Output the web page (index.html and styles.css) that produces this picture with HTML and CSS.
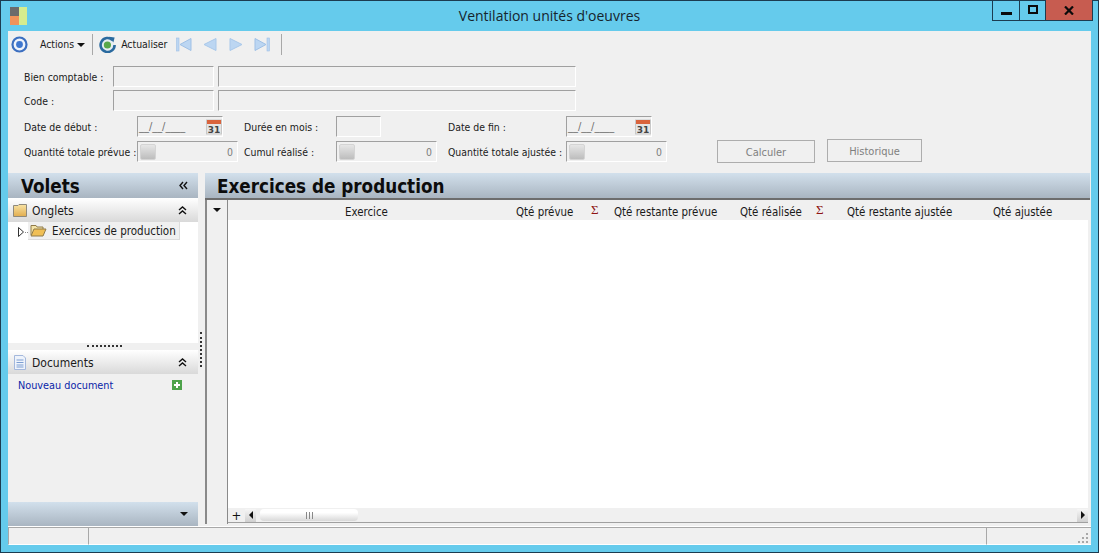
FILE: index.html
```html
<!DOCTYPE html>
<html lang="fr">
<head>
<meta charset="utf-8">
<title>Ventilation unités d'oeuvres</title>
<link rel="stylesheet" href="styles.css">
</head>
<body>
<div class="window">
  <header class="titlebar">
    <div class="tb-left">
      <svg class="app-icon" width="17" height="18" viewBox="0 0 17 18"><rect x="0" y="0" width="9" height="9" fill="#6b6b6b"/><rect x="0" y="9" width="9" height="9" fill="#f0935a"/><rect x="9" y="0" width="8" height="18" fill="#d6ec8e"/></svg>
    </div>
    <div class="title">Ventilation unités d'oeuvres</div>
    <div class="tb-right">
      <div class="winbtns">
        <div class="wb wb-min"><svg width="11" height="4" viewBox="0 0 11 4"><rect width="11" height="3" y="1" fill="#0b0b0b"/></svg></div>
        <div class="wb wb-max"><svg width="10" height="9" viewBox="0 0 10 9"><rect x="1" y="1" width="8" height="7" fill="none" stroke="#0b0b0b" stroke-width="2"/></svg></div>
        <div class="wb wb-close"><svg width="10" height="9" viewBox="0 0 10 9"><path d="M1 0.5L9 8.5M9 0.5L1 8.5" stroke="#0b0b0b" stroke-width="2.2" fill="none"/></svg></div>
      </div>
    </div>
  </header>

  <main class="client">
    <div class="toolbar">
      <svg class="ic-target" width="17" height="17" viewBox="0 0 17 17"><circle cx="8.5" cy="8.5" r="7" fill="#eef3fb" stroke="#3c6fc0" stroke-width="2.2"/><circle cx="8.5" cy="8.5" r="3.4" fill="#3f77cf"/></svg>
      <span class="tool-actions">Actions</span>
      <span class="caret"></span>
      <span class="tsep tsep-1"></span>
      <svg class="ic-refresh" width="17" height="17" viewBox="0 0 17 17"><path d="M13.5 4A7 7 0 1 0 15.6 9" fill="#e6edf2" stroke="#2a6a9f" stroke-width="2.6"/><path d="M10 0.8L15.6 1.4L14.4 6.4Z" fill="#2a6a9f"/><circle cx="8.4" cy="9" r="3.6" fill="#58a84a"/></svg>
      <span class="tool-refresh">Actualiser</span>
      <svg class="nav nav-1" width="16" height="15" viewBox="0 0 16 15"><rect x="0.5" y="1" width="2.5" height="13" fill="#bcd6f2" stroke="#9fc0e6" stroke-width="0.6"/><path d="M15 1.5V13.5L4 7.5Z" fill="#bcd6f2" stroke="#9fc0e6"/></svg>
      <svg class="nav nav-2" width="14" height="15" viewBox="0 0 14 15"><path d="M13 1.5V13.5L1 7.5Z" fill="#bcd6f2" stroke="#a9c8ea"/></svg>
      <svg class="nav nav-3" width="14" height="15" viewBox="0 0 14 15"><path d="M1 1.5V13.5L13 7.5Z" fill="#bcd6f2" stroke="#a9c8ea"/></svg>
      <svg class="nav nav-4" width="16" height="15" viewBox="0 0 16 15"><path d="M1 1.5V13.5L12 7.5Z" fill="#bcd6f2" stroke="#9fc0e6"/><rect x="13" y="1" width="2.5" height="13" fill="#bcd6f2" stroke="#9fc0e6" stroke-width="0.6"/></svg>
      <span class="tsep tsep-2"></span>
    </div>

    <section class="form">
      <div class="row row-1">
        <label class="lbl w-89">Bien comptable :</label>
        <div class="field f-101"></div>
        <div class="field f-358"></div>
      </div>
      <div class="row row-2">
        <label class="lbl w-89">Code :</label>
        <div class="field f-101"></div>
        <div class="field f-358"></div>
      </div>
      <div class="row row-3">
        <label class="lbl w-113">Date de début :</label>
        <div class="field date"><span class="mask">__/__/____</span>
          <svg class="cal" width="16" height="16" viewBox="0 0 16 16"><rect x="0.5" y="1" width="15" height="14" fill="#e4e4e4" stroke="#c8c8c8"/><rect x="1" y="1" width="14" height="4" fill="#d9633c"/><text x="8" y="14" text-anchor="middle" class="cal-t">31</text></svg>
        </div>
        <label class="lbl w-92 gap-21">Durée en mois :</label>
        <div class="field f-45"></div>
        <label class="lbl w-118 gap-67">Date de fin :</label>
        <div class="field date"><span class="mask">__/__/____</span>
          <svg class="cal" width="16" height="16" viewBox="0 0 16 16"><rect x="0.5" y="1" width="15" height="14" fill="#e4e4e4" stroke="#c8c8c8"/><rect x="1" y="1" width="14" height="4" fill="#d9633c"/><text x="8" y="14" text-anchor="middle" class="cal-t">31</text></svg>
        </div>
      </div>
      <div class="row row-4">
        <label class="lbl w-113">Quantité totale prévue :</label>
        <div class="field num"><span class="spin"></span><span class="zero">0</span></div>
        <label class="lbl w-92 gap-6">Cumul réalisé :</label>
        <div class="field num"><span class="spin"></span><span class="zero">0</span></div>
        <label class="lbl w-118 gap-10">Quantité totale ajustée :</label>
        <div class="field num"><span class="spin"></span><span class="zero">0</span></div>
        <button class="btn btn-calc" type="button">Calculer</button>
        <button class="btn btn-hist" type="button">Historique</button>
      </div>
    </section>

    <section class="panels">
      <aside class="side">
        <div class="pane-head"><h2>Volets</h2>
          <svg class="chev" width="9" height="9" viewBox="0 0 9 9"><path d="M4 1L1 4.5L4 8M8 1L5 4.5L8 8" fill="none" stroke="#111" stroke-width="1.4"/></svg>
        </div>
        <div class="group">
          <svg class="grp-ic" width="14" height="13" viewBox="0 0 14 13"><defs><linearGradient id="fold" x1="0" y1="0" x2="0" y2="1"><stop offset="0" stop-color="#f8e3a4"/><stop offset="1" stop-color="#e2ad4e"/></linearGradient></defs><path d="M0.5 1.5H5L6 0.5H13.5V12.5H0.5Z" fill="url(#fold)" stroke="#8f8a7c"/></svg>
          <span class="grp-t">Onglets</span>
          <svg class="chev" width="9" height="9" viewBox="0 0 9 9"><path d="M1 4L4.5 1L8 4M1 8L4.5 5L8 8" fill="none" stroke="#111" stroke-width="1.4"/></svg>
        </div>
        <div class="tree">
          <svg class="tw" width="6" height="10" viewBox="0 0 6 10"><path d="M0.5 0.5V9.5L5.5 5Z" fill="#fff" stroke="#333"/></svg>
          <span class="dots-h"></span>
          <div class="node">
            <svg width="17" height="13" viewBox="0 0 17 13"><path d="M1 11V1.5H6L7 3H13V5" fill="#f4e4a8" stroke="#8f7a4a"/><path d="M1 12L4 5H16L13 12Z" fill="#f0bf55" stroke="#8f7a4a"/></svg>
            <span>Exercices de production</span>
          </div>
        </div>
        <div class="split-h"><span class="grip-h"></span></div>
        <div class="group">
          <svg class="grp-ic" width="14" height="15" viewBox="0 0 14 15"><path d="M1.5 0.5H10L12.5 3V14.5H1.5Z" fill="#eef3fb" stroke="#a4b8dc"/><path d="M3.5 5H10.5M3.5 7.5H10.5M3.5 10H10.5M3.5 12H10.5" stroke="#7c9ed2"/></svg>
          <span class="grp-t">Documents</span>
          <svg class="chev" width="9" height="9" viewBox="0 0 9 9"><path d="M1 4L4.5 1L8 4M1 8L4.5 5L8 8" fill="none" stroke="#111" stroke-width="1.4"/></svg>
        </div>
        <div class="docs">
          <a class="doc-link">Nouveau document</a>
          <svg width="10" height="10" viewBox="0 0 10 10"><rect width="10" height="10" fill="#4da24a"/><path d="M5 2V8M2 5H8" stroke="#fff" stroke-width="2"/></svg>
        </div>
        <div class="side-foot"><span class="caret caret-b"></span></div>
      </aside>

      <div class="split-v"><span class="grip-v"></span></div>

      <div class="main">
        <div class="pane-head main-head"><h2>Exercices de production</h2></div>
        <div class="grid">
          <div class="gutter">
            <div class="gut-top"><span class="caret caret-b"></span></div>
            <div class="gut-fill"></div>
          </div>
          <div class="table">
            <div class="thead">
              <span class="th th-ex">Exercice</span>
              <span class="th th-qp">Qté prévue</span>
              <span class="sig sig-1">Σ</span>
              <span class="th th-qrp">Qté restante prévue</span>
              <span class="th th-qr">Qté réalisée</span>
              <span class="sig sig-2">Σ</span>
              <span class="th th-qra">Qté restante ajustée</span>
              <span class="th th-qa">Qté ajustée</span>
            </div>
            <div class="tbody"></div>
            <div class="hscroll">
              <span class="plus">+</span>
              <span class="sb-btn"><span class="arr-l"></span></span>
              <span class="thumb"><span class="thumb-grip"></span></span>
              <span class="sb-space"></span>
              <span class="sb-btn sb-end"><span class="arr-r"></span></span>
            </div>
          </div>
        </div>
      </div>
    </section>

    <footer class="status">
      <div class="st st-1"></div>
      <div class="st st-2"></div>
      <div class="st st-3">
        <svg width="11" height="11" viewBox="0 0 11 11" fill="#a8a8a8"><rect x="8" y="0" width="2" height="2"/><rect x="4" y="4" width="2" height="2"/><rect x="8" y="4" width="2" height="2"/><rect x="0" y="8" width="2" height="2"/><rect x="4" y="8" width="2" height="2"/><rect x="8" y="8" width="2" height="2"/></svg>
      </div>
    </footer>
  </main>
</div>
</body>
</html>
```

FILE: styles.css
```css
* { box-sizing: border-box; }
html, body { margin: 0; padding: 0; }
body { width: 1099px; height: 553px; overflow: hidden; font-family: "DejaVu Sans Condensed", "DejaVu Sans", sans-serif; font-size: 10.4px; color: #1a1a1a; background: #65cbec; }
.window { width: 1099px; height: 553px; display: flex; flex-direction: column; background: #65cbec; border: 1px solid #1c3c50; }

.titlebar { height: 30px; display: grid; grid-template-columns: 1fr auto 1fr; align-items: start; flex: none; }
.tb-left { padding: 6px 0 0 9px; }
.app-icon { display: block; }
.title { font-family: "Open Sans", sans-serif; font-size: 14px; line-height: 30px; color: #16242c; }
.tb-right { display: flex; justify-content: flex-end; padding-right: 5px; }
.winbtns { display: flex; height: 21px; margin-top: -1px; border: 1px solid #1c3c50; border-top: 0; }
.wb { display: flex; align-items: center; justify-content: center; height: 100%; }
.wb-min { width: 27px; border-right: 1px solid #1c3c50; padding-top: 5px; }
.wb-max { width: 26px; border-right: 1px solid #1c3c50; padding-bottom: 2px; }
.wb-close { width: 46px; background: #c75c50; }

.client { margin: 0 7px 7px 7px; flex: 1; min-height: 0; display: flex; flex-direction: column; background: #f0f0f0; }

.toolbar { height: 26px; flex: none; display: flex; align-items: center; padding-left: 3px; }
.ic-target { flex: none; }
.tool-actions { margin-left: 12px; }
.caret { display: inline-block; width: 0; height: 0; border-left: 4px solid transparent; border-right: 4px solid transparent; border-top: 4px solid #111; margin-left: 3px; margin-top: 2px; }
.tsep { width: 1px; height: 21px; background: #a8a8a8; flex: none; }
.tsep-1 { margin-left: 7px; }
.ic-refresh { margin-left: 6px; flex: none; }
.tool-refresh { margin-left: 5px; width: 55px; }
.nav { flex: none; }
.nav-2 { margin-left: 11px; }
.nav-3 { margin-left: 12px; }
.nav-4 { margin-left: 11px; }
.tsep-2 { margin-left: 11px; }

.form { height: 116px; flex: none; padding: 9px 0 0 16px; display: flex; flex-direction: column; }
.row { display: flex; align-items: center; }
.row-1 { height: 21px; }
.row-2 { height: 21px; margin-top: 3px; }
.row-3 { height: 21px; margin-top: 5px; }
.row-4 { height: 23px; margin-top: 3px; }
.lbl { flex: none; white-space: nowrap; padding-top: 1px; }
.w-89 { width: 89px; }
.w-113 { width: 113px; }
.w-92 { width: 92px; }
.w-118 { width: 118px; }
.gap-21 { margin-left: 21px; }
.gap-67 { margin-left: 67px; }
.gap-6 { margin-left: 6px; }
.gap-10 { margin-left: 11px; }
.field { flex: none; height: 21px; border: 1px solid #fff; border-top-color: #a0a0a0; border-left-color: #a0a0a0; background: #f0f0f0; }
.f-101 { width: 101px; margin-right: 4px; }
.f-358 { width: 358px; }
.f-45 { width: 45px; }
.date { width: 86px; display: flex; align-items: center; justify-content: space-between; padding: 0 0 0 1px; }
.mask { color: #6d6d6d; font-size: 11px; }
.cal { flex: none; }
.cal-t { font-family: "DejaVu Sans", sans-serif; font-size: 9px; font-weight: 700; fill: #444; }
.num { width: 101px; display: flex; align-items: center; justify-content: space-between; padding: 0 4px 0 2px; }
.spin { width: 16px; height: 16px; background: linear-gradient(#e6e6e6, #bdbdbd); border: 1px solid #d4d4d4; border-radius: 2px; }
.zero { color: #7c7c7c; }
.btn { flex: none; padding: 2px 0 0; background: #f0f0f0; border: 1px solid #adadad; color: #7f7f7f; font: inherit; font-size: 11px; }
.btn-calc { width: 98px; height: 23px; margin-left: 50px; }
.btn-hist { width: 95px; height: 23px; margin-left: 12px; margin-top: -2px; }

.panels { flex: 1; min-height: 0; display: flex; }
.side { width: 190px; flex: none; display: flex; flex-direction: column; }
.pane-head { height: 25px; flex: none; display: flex; align-items: center; justify-content: space-between; background: linear-gradient(#d2e0ec, #a9b5c1); padding: 0 10px 0 13px; }
.pane-head h2 { margin: 0; padding-top: 2px; font-size: 18.7px; font-weight: 700; color: #0c0c0c; }
.chev { flex: none; }
.group { height: 24px; flex: none; display: flex; align-items: center; padding: 0 11px 0 5px; background: linear-gradient(#ffffff, #d9d9d9); }
.grp-ic { flex: none; }
.grp-t { margin-left: 5px; flex: 1; font-size: 12px; padding-top: 2px; }
.tree { height: 121px; flex: none; background: #fff; display: flex; align-items: flex-start; padding: 0 0 0 10px; }
.tw { flex: none; margin-top: 5px; }
.dots-h { width: 3px; flex: none; margin-top: 10px; border-top: 1px dotted #888; margin-left: 1px; }
.node { height: 18px; flex: none; display: flex; align-items: center; gap: 5px; padding: 0 3px 0 2px; background: #f0f0f0; border-right: 1px solid #dcdcdc; border-bottom: 1px solid #dcdcdc; font-size: 11.5px; white-space: nowrap; }
.split-h { height: 7px; flex: none; display: flex; align-items: center; justify-content: center; background: #f0f0f0; }
.grip-h { width: 35px; border-top: 2px dotted #333; margin-left: 2px; margin-top: -1px; }
.docs { flex: 1; display: flex; align-items: flex-start; justify-content: space-between; padding: 5px 16px 0 10px; }
.doc-link { color: #0b1fa8; font-size: 10.8px; }
.docs svg { margin-top: 1px; }
.side-foot { height: 24px; flex: none; display: flex; align-items: center; justify-content: flex-end; padding-right: 10px; background: linear-gradient(#d2e0ec, #a9b5c1); }
.caret-b { margin: 0; }

.split-v { width: 7px; flex: none; display: flex; align-items: center; padding-left: 2px; }
.grip-v { height: 35px; border-left: 2px dotted #333; }

.main { flex: 1; min-width: 0; display: flex; flex-direction: column; padding-right: 1px; }
.main-head { height: 27px; padding-left: 12px; border-bottom: 2px solid #6d6d6d; }
.grid { flex: 1; min-height: 0; display: flex; margin-bottom: 2px; border-left: 2px solid #8a8a8a; }
.gutter { width: 21px; flex: none; border-right: 1px solid #8a8a8a; display: flex; flex-direction: column; }
.gut-top { height: 20px; display: flex; align-items: center; justify-content: center; }
.gut-fill { flex: 1; }
.table { flex: 1; min-width: 0; display: flex; flex-direction: column; padding-bottom: 1px; }
.thead { height: 20px; flex: none; display: flex; align-items: center; padding: 3px 3px 0 0; white-space: nowrap; }
.th { flex: none; font-size: 11.4px; }
.th-ex { margin-left: 117px; width: 171px; }
.th-qp { width: 75px; }
.sig { flex: none; font-family: "Liberation Serif", serif; font-size: 13px; color: #8e1414; margin-top: -4px; }
.sig-1 { width: 23px; }
.th-qrp { width: 126px; }
.th-qr { width: 76px; }
.sig-2 { width: 31px; }
.th-qra { width: 146px; }
.th-qa { width: 60px; }
.tbody { flex: 1; min-height: 0; background: #fff; margin-right: 2px; }
.hscroll { height: 15px; flex: none; display: flex; align-items: center; border-bottom: 1px solid #a0a0a0; background: #f0f0f0; margin-right: 2px; }
.plus { width: 17px; flex: none; text-align: center; font-size: 13px; line-height: 13px; color: #111; }
.sb-btn { width: 11px; height: 13px; flex: none; display: flex; align-items: center; justify-content: center; background: linear-gradient(#f6f6f6, #cfcfcf); }
.arr-l { border-top: 4px solid transparent; border-bottom: 4px solid transparent; border-right: 4px solid #111; }
.arr-r { border-top: 4px solid transparent; border-bottom: 4px solid transparent; border-left: 4px solid #111; }
.thumb { width: 98px; height: 12px; flex: none; margin-left: 4px; border-radius: 4px; background: linear-gradient(#fff 30%, #d8d8d8); display: flex; align-items: center; justify-content: center; }
.thumb-grip { width: 7px; height: 7px; border-left: 1px solid #888; border-right: 1px solid #888; background: linear-gradient(90deg, transparent 2px, #888 2px, #888 3px, transparent 3px); }
.sb-space { flex: 1; }

.status { height: 19px; flex: none; display: flex; border-top: 1px solid #fff; }
.st { height: 18px; border-top: 1px solid #a8a8a8; border-left: 1px solid #a8a8a8; border-bottom: 1px solid #fff; }
.st-1 { width: 80px; }
.st-2 { width: 898px; }
.st-3 { flex: 1; display: flex; align-items: flex-end; justify-content: flex-end; padding-right: 2px; }
```
